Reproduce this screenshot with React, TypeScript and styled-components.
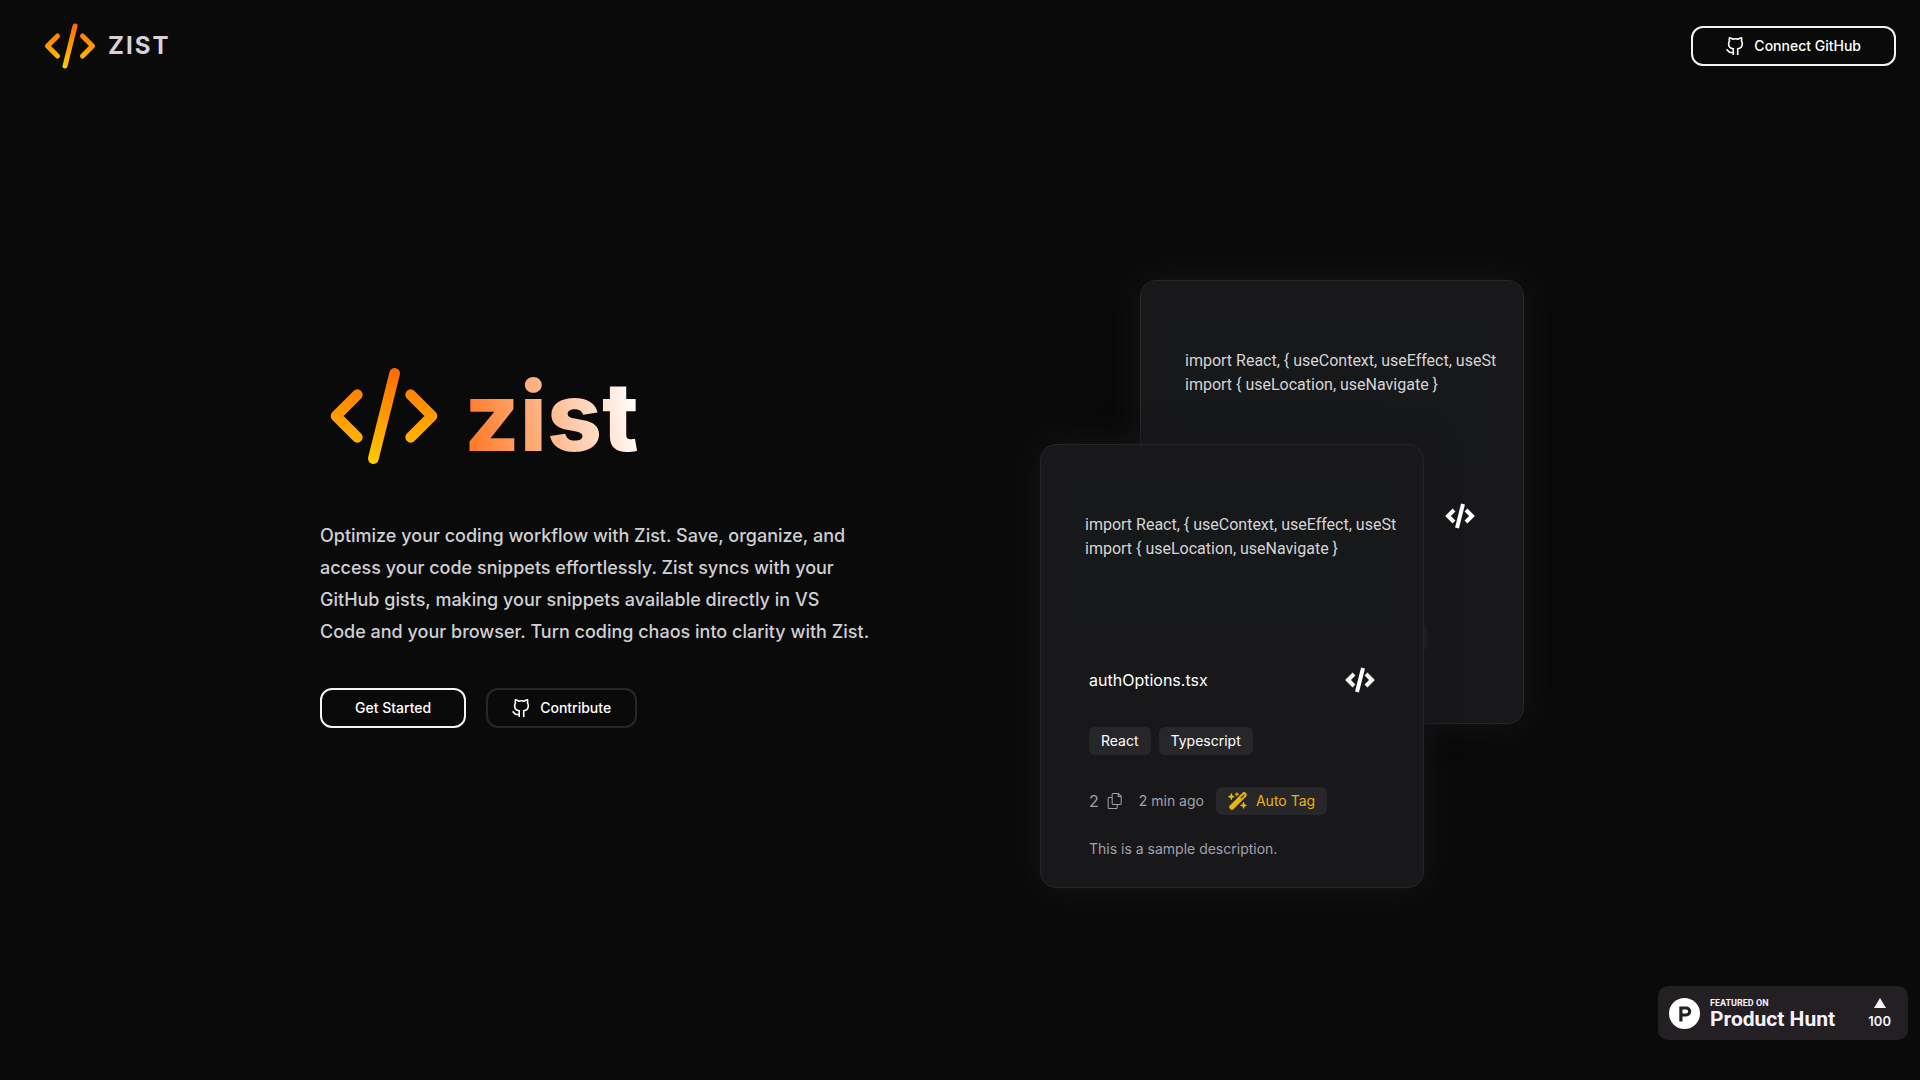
import React from "react";
import styled, { createGlobalStyle } from "styled-components";
import { FaWandMagicSparkles } from "react-icons/fa6";
import { VscFiles } from "react-icons/vsc";

const GlobalStyle = createGlobalStyle`
  * { box-sizing: border-box; }
  body {
    margin: 0;
    background: #0a0a0a;
    color: #ffffff;
    font-family: Inter, "Liberation Sans", sans-serif;
  }
  h1, p, pre, ul { margin: 0; padding: 0; }
`;

const Page = styled.div`
  display: flex;
  flex-direction: column;
  min-height: 100vh;
`;

const Header = styled.header`
  display: flex;
  align-items: center;
  justify-content: space-between;
  height: 88px;
  padding: 4px 24px 0 40px;
`;

const Brand = styled.a`
  display: flex;
  align-items: center;
  gap: 8px;
  color: #d4d4d8;
  font-size: 24px;
  font-weight: 700;
  line-height: 32px;
  letter-spacing: 2px;
  text-decoration: none;
`;

const Button = styled.button<{ $quiet?: boolean }>`
  display: inline-flex;
  align-items: center;
  justify-content: center;
  gap: 10px;
  height: 40px;
  padding: 0 ${(p) => (p.$quiet ? 24 : 33)}px;
  border: 2px solid ${(p) => (p.$quiet ? "#27272a" : "#f4f4f5")};
  border-radius: 12px;
  background: transparent;
  color: #ffffff;
  font-family: inherit;
  font-size: 14px;
  font-weight: 500;
  line-height: 20px;
  cursor: pointer;
`;

const Hero = styled.main`
  flex: 1;
  display: grid;
  grid-template-columns: 1fr 1fr;
  align-items: center;
  width: 100%;
  max-width: 1280px;
  margin: 0 auto;
`;

const Intro = styled.section`
  display: flex;
  flex-direction: column;
  gap: 40px;
  padding-bottom: 88px;
`;

const TitleRow = styled.div`
  display: flex;
  align-items: center;
  gap: 16px;
`;

const Title = styled.h1`
  font-size: 96px;
  font-weight: 800;
  line-height: 128px;
  background: linear-gradient(80deg, #ff7018, #ffffff 95%);
  background-clip: text;
  -webkit-background-clip: text;
  color: transparent;
`;

const Lead = styled.p`
  max-width: 560px;
  color: #d0d0d3;
  font-size: 18px;
  font-weight: 500;
  line-height: 32px;
`;

const Actions = styled.div`
  display: flex;
  gap: 20px;
`;

const CardStack = styled.section`
  display: grid;
  justify-content: start;
  padding-left: 80px;
`;

const Card = styled.article<{ $front?: boolean }>`
  grid-area: 1 / 1;
  align-self: start;
  width: 384px;
  margin: ${(p) => (p.$front ? "164px 100px 0 0" : "0 0 0 100px")};
  padding: 35px 48px 28px;
  border: 1px solid #27272a;
  border-radius: 16px;
  background: #18181b;
  box-shadow: 0 0 32px #161618;
`;

const Code = styled.pre`
  height: 156px;
  margin: 0 -20px 32px;
  padding: 33px 0 0 16px;
  background: #17181a;
  color: #d4d4d4;
  font-family: Roboto, "Liberation Sans", sans-serif;
  font-size: 16px;
  line-height: 24px;
`;

const FileRow = styled.div`
  display: flex;
  align-items: center;
  justify-content: space-between;
  height: 24px;
  margin-bottom: 35px;
  font-size: 16px;
  line-height: 24px;
`;

const TagList = styled.ul`
  display: flex;
  gap: 8px;
  margin-bottom: 32px;
  list-style: none;
`;

const Tag = styled.li`
  padding: 4px 12px;
  border-radius: 6px;
  background: #27272a;
  font-size: 14px;
  line-height: 20px;
`;

const MetaRow = styled.div`
  display: flex;
  align-items: center;
  margin-bottom: 24px;
  color: #a1a1aa;
  font-size: 14px;
  line-height: 20px;
`;

const FileCount = styled.span`
  display: flex;
  align-items: center;
  gap: 8px;
  margin-right: 16px;
  font-size: 16px;
`;

const AutoTag = styled.button`
  display: flex;
  align-items: center;
  gap: 8px;
  height: 28px;
  margin-left: 12px;
  padding: 0 12px;
  border: 0;
  border-radius: 6px;
  background: #27272a;
  color: #eab308;
  font-family: inherit;
  font-size: 14px;
  line-height: 20px;
  cursor: pointer;
`;

const Description = styled.p`
  min-height: 20px;
  color: #a1a1aa;
  font-size: 14px;
  line-height: 20px;
`;

const HuntBadge = styled.a`
  position: fixed;
  right: 12px;
  bottom: 40px;
  display: flex;
  align-items: center;
  gap: 10px;
  width: 250px;
  height: 54px;
  padding: 1px 17px 0 11px;
  border-radius: 10px;
  background: #231f23;
  color: #f4f1ff;
  font-family: Roboto, "Liberation Sans", sans-serif;
  font-weight: 700;
  text-decoration: none;
`;

const HuntLabel = styled.span`
  display: flex;
  flex-direction: column;
  flex: 1;
  padding-top: 1px;
`;

const HuntSmall = styled.span`
  font-size: 9px;
  line-height: 10px;
`;

const HuntName = styled.span`
  font-size: 21px;
  line-height: 22px;
`;

const HuntVotes = styled.span`
  display: flex;
  flex-direction: column;
  align-items: center;
  gap: 5px;
  font-family: Inter, "Liberation Sans", sans-serif;
  font-size: 13px;
  font-weight: 600;
  line-height: 16px;
`;

function ZistMark({ size, id }: { size: number; id: string }) {
  return (
    <svg
      width={size}
      height={size}
      viewBox="0 0 24 24"
      fill="none"
      stroke={`url(#${id})`}
      strokeWidth="2"
      strokeLinecap="round"
      strokeLinejoin="round"
      aria-hidden="true"
    >
      <defs>
        <linearGradient id={id} gradientUnits="userSpaceOnUse" x1="12" y1="3" x2="12" y2="21">
          <stop offset="0" stopColor="#ff6a00" />
          <stop offset="1" stopColor="#ffcc00" />
        </linearGradient>
      </defs>
      <path d="M7 8l-4 4 4 4M17 8l4 4-4 4M14 4l-4 16" />
    </svg>
  );
}

function GitHubMark() {
  return (
    <svg
      width="18"
      height="18"
      viewBox="0 0 18 18"
      fill="none"
      stroke="currentColor"
      strokeWidth="1.6"
      aria-hidden="true"
    >
      <path d="M7.2 18v-6.2C4 11.4 2.6 9.8 2.6 6.8c0-1.2.3-2.1.9-2.9C3.1 2.8 3.1 1.9 3.4.9c1.2.1 2.3.5 3.2 1.2a12 12 0 0 1 5.7 0c.9-.7 2-1.1 3.2-1.2.3 1 .3 1.9-.1 2.9.6.8.9 1.7.9 2.9 0 3-1.4 4.7-4.6 5.1V18" />
      <path d="M.5 12.6c1.7.4 1.9 2.9 4.2 2.9h2.5" />
    </svg>
  );
}

function CodeMark() {
  return (
    <svg width="30" height="26" viewBox="0 0 30 26" fill="none" stroke="#ffffff" strokeWidth="4" aria-hidden="true">
      <path d="M9 7l-6 6 6 6M21 7l6 6-6 6" />
      <path d="M18 1l-6 24" />
    </svg>
  );
}

function HuntMark() {
  return (
    <svg width="31" height="31" viewBox="0 0 31 31" aria-hidden="true">
      <circle cx="15.5" cy="15.5" r="15.5" fill="#ffffff" />
      <path
        fill="#231f23"
        fillRule="evenodd"
        d="M10.3 8.6h7a4.9 4.9 0 0 1 0 9.8h-3.8v5h-3.2zM13.5 11.6v3.8h3.7a1.9 1.9 0 0 0 0-3.8z"
      />
    </svg>
  );
}

interface SnippetProps {
  front?: boolean;
  fileName?: string;
  description?: string;
}

function SnippetCard({ front, fileName, description }: SnippetProps) {
  return (
    <Card $front={front}>
      <Code>{"import React, { useContext, useEffect, useSt\nimport { useLocation, useNavigate }"}</Code>
      <FileRow>
        <span>{fileName}</span>
        <CodeMark />
      </FileRow>
      <TagList>
        <Tag>React</Tag>
        <Tag>Typescript</Tag>
      </TagList>
      <MetaRow>
        <FileCount>
          2 <VscFiles size={16} />
        </FileCount>
        <span>2 min ago</span>
        <AutoTag type="button">
          <FaWandMagicSparkles size={20} />
          Auto Tag
        </AutoTag>
      </MetaRow>
      <Description>{description}</Description>
    </Card>
  );
}

export default function App() {
  return (
    <Page>
      <GlobalStyle />
      <Header>
        <Brand href="#">
          <ZistMark size={60} id="brand-fill" />
          ZIST
        </Brand>
        <Button type="button">
          <GitHubMark />
          Connect GitHub
        </Button>
      </Header>
      <Hero>
        <Intro>
          <TitleRow>
            <ZistMark size={128} id="hero-fill" />
            <Title>zist</Title>
          </TitleRow>
          <Lead>
            Optimize your coding workflow with Zist. Save, organize, and access your code snippets
            effortlessly. Zist syncs with your GitHub gists, making your snippets available directly
            in VS
            <br />
            Code and your browser. Turn coding chaos into clarity with Zist.
          </Lead>
          <Actions>
            <Button type="button">Get Started</Button>
            <Button type="button" $quiet>
              <GitHubMark />
              Contribute
            </Button>
          </Actions>
        </Intro>
        <CardStack>
          <SnippetCard />
          <SnippetCard front fileName="authOptions.tsx" description="This is a sample description." />
        </CardStack>
      </Hero>
      <HuntBadge href="#">
        <HuntMark />
        <HuntLabel>
          <HuntSmall>FEATURED ON</HuntSmall>
          <HuntName>Product Hunt</HuntName>
        </HuntLabel>
        <HuntVotes>
          <svg width="12" height="10" viewBox="0 0 12 10" fill="currentColor" aria-hidden="true">
            <path d="M6 0l6 10H0z" />
          </svg>
          100
        </HuntVotes>
      </HuntBadge>
    </Page>
  );
}
